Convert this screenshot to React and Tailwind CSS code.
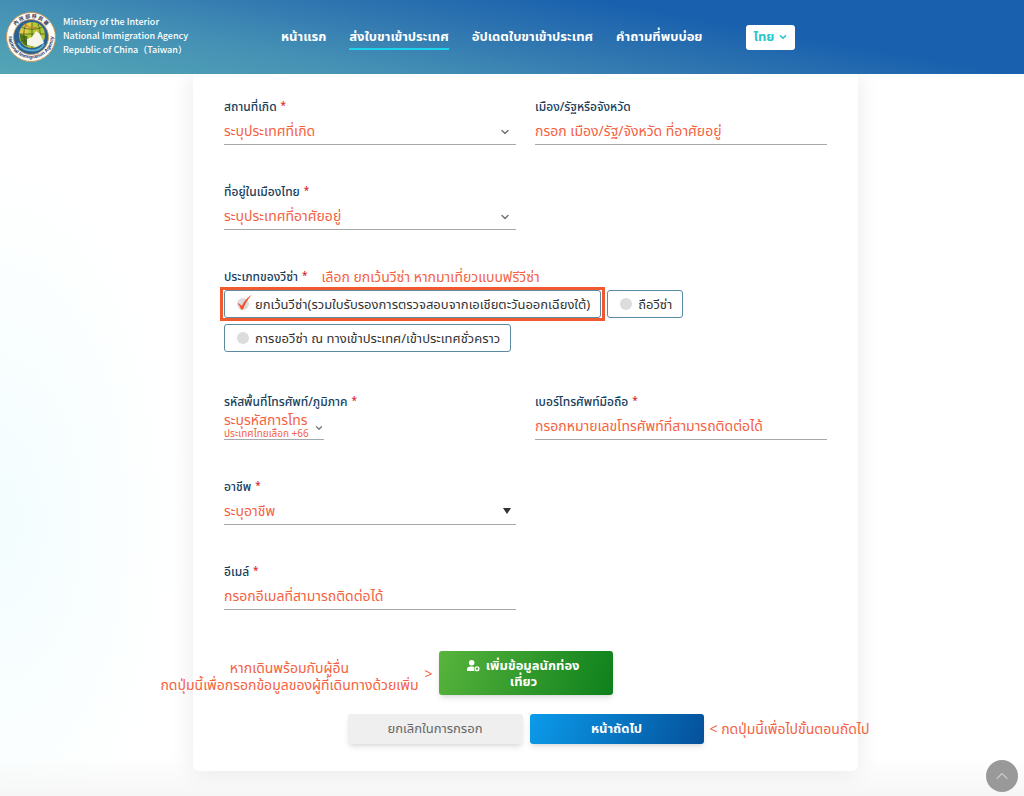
import React, { useState } from 'react';
import { ChevronDown, ChevronUp } from 'lucide-react';

const NAV_ITEMS = [
    { label: 'หน้าแรก' },
    { label: 'ส่งใบขาเข้าประเทศ', active: true },
    { label: 'อัปเดตใบขาเข้าประเทศ' },
    { label: 'คำถามที่พบบ่อย' },
];

const VISA_TYPES = [
    { id: 'exempt', label: 'ยกเว้นวีซ่า(รวมใบรับรองการตรวจสอบจากเอเชียตะวันออกเฉียงใต้)' },
    { id: 'holder', label: 'ถือวีซ่า' },
    { id: 'arrival', label: 'การขอวีซ่า ณ ทางเข้าประเทศ/เข้าประเทศชั่วคราว' },
];

const AgencySeal = () => (
    <svg viewBox="0 0 50 50" className="size-[50px] shrink-0" aria-hidden="true">
        <defs>
            <path id="seal-top" d="M 6 25 A 19 19 0 0 1 44 25" />
            <path id="seal-bottom" d="M 2.500 24 A 22.500 22.500 0 0 0 47.500 24" />
        </defs>
        <circle cx="25" cy="25" r="24.500" fill="#fdfcf6" stroke="#c9985a" strokeWidth="1" />
        <circle cx="25" cy="25" r="17.500" fill="#2c5f94" stroke="#c99a58" strokeWidth="0.800" />
        <circle cx="26" cy="23" r="13" fill="#b5c832" />
        <path d="M13 22 Q17 10 27 10.500 Q22 15 22 22 Q17 25 13 22" fill="#e6c94a" />
        <path d="M18 33 Q13 27 14 22 L21 24 L24 34 Z" fill="#54781f" />
        <path d="M13 22 H39 M16 15.500 Q26 19 36 15.500 M15 29 H37 M26 10 V36 M20 12 Q15 23 21 34 M32 12 Q37 23 31 34" fill="none" stroke="#33551c" strokeWidth="0.700" />
        <path d="M21 27 L26 25 L30 19 L34 22 L38 31 L30 35 L21 33 Z" fill="#f6f5ea" />
        <path d="M17 11 L24 15 L32 15 L28 17 L19 14 Z" fill="#c8813a" />
        <path d="M12 31 Q17 39 27 38.500 Q35 38 38 32" fill="none" stroke="#57b0c9" strokeWidth="2" />
        <text className="font-['Noto_Sans_CJK_TC',sans-serif] text-[5px] font-bold" fill="#3b3f63" textAnchor="middle">
            <textPath href="#seal-top" startOffset="50%">內 政 部 移 民 署</textPath>
        </text>
        <text className="font-['Liberation_Sans',sans-serif] text-[5px] font-bold" fill="#2b3570" textAnchor="middle">
            <textPath href="#seal-bottom" startOffset="50%">National Immigration Agency</textPath>
        </text>
    </svg>
);

const UserPlusIcon = () => (
    <svg viewBox="0 0 14 13" className="w-[13px] h-3 inline-block mr-0.5" fill="currentColor" aria-hidden="true">
        <circle cx="5" cy="3" r="3" />
        <path d="M0 12 V10 Q0 7 4 7 H6 Q7.500 7 8 7.500 Q6.500 9.500 8 12 Z" />
        <circle cx="10.800" cy="9.500" r="2" fill="none" stroke="currentColor" strokeWidth="1.500" />
    </svg>
);

const FieldLabel = ({ htmlFor, required, compact, children }) => (
    <label
        htmlFor={htmlFor}
        className={
            compact
                ? 'flex h-4 leading-5 text-xs font-medium text-[#17405c] whitespace-nowrap'
                : 'flex h-5 leading-5 text-xs font-medium text-[#17405c] whitespace-nowrap'
        }
    >
        {children}
        {required && <span className="ml-1 text-[10px] leading-4 text-[#d8262f]">*</span>}
    </label>
);

const TextField = ({ id, label, required, placeholder }) => (
    <div className="flex flex-col">
        <FieldLabel htmlFor={id} required={required}>{label}</FieldLabel>
        <input
            id={id}
            placeholder={placeholder}
            className="h-7 w-full border-b border-[#a3a9ad] bg-transparent text-sm text-[#f4623f] placeholder:text-[#f4623f] outline-none"
        />
    </div>
);

const SelectField = ({ id, label, required, placeholder, solidArrow }) => (
    <div className="flex flex-col">
        <FieldLabel htmlFor={id} required={required}>{label}</FieldLabel>
        <div className="relative">
            <select
                id={id}
                className="block h-7 w-full appearance-none border-b border-[#a3a9ad] bg-transparent text-sm text-[#f4623f] outline-none"
            >
                <option>{placeholder}</option>
            </select>
            {solidArrow ? (
                <svg viewBox="0 0 8 6" className="absolute right-[5px] top-[11px] w-2 h-1.5 pointer-events-none" aria-hidden="true">
                    <path d="M0 0 H8 L4 6 Z" fill="#333" />
                </svg>
            ) : (
                <ChevronDown size={12} strokeWidth={3} className="absolute right-[5px] top-[9px] text-[#777] pointer-events-none" />
            )}
        </div>
    </div>
);

const VisaOption = ({ option, checked, onChange }) => (
    <label className="relative flex items-center gap-1.5 h-7 rounded-[3px] border border-[#5d8aa3] pl-3 pr-2.5">
        {checked && <span className="absolute -inset-x-[5px] -inset-y-[4px] border-3 border-[#f15a31] pointer-events-none" />}
        <span className="relative size-3">
            <input
                type="radio"
                name="visa"
                checked={checked}
                onChange={onChange}
                className="block size-3 appearance-none rounded-full bg-[#dcdcdc]"
            />
            {checked && (
                <svg viewBox="0 0 16 16" className="absolute left-0 -top-1 size-4 pointer-events-none" aria-hidden="true">
                    <path d="M0.500 9 Q3 9.500 4.800 12 Q8 5 15 0.500 Q9 7 6 15.500 L4 15.500 Q2.500 11 0.500 9 Z" fill="#f0532d" />
                </svg>
            )}
        </span>
        <span className="text-[13px] leading-5 text-[#333] whitespace-nowrap">{option.label}</span>
    </label>
);

export default function App() {
    const [visa, setVisa] = useState('exempt');

    return (
        <div className="min-h-screen bg-[radial-gradient(ellipse_180px_360px_at_0_520px,#f3fdfe,transparent)] font-['Noto_Sans','Noto_Sans_Thai',sans-serif]">
            <header className="relative z-10 flex items-center h-[74px] px-1.5 bg-[linear-gradient(10deg,#54a6b5,#4490b5_28%,#2f75b0_50%,#1961ae_70%)] text-white">
                <AgencySeal />
                <div className="ml-[7px] w-[218px] shrink-0 pb-0.5 font-['Noto_Sans_CJK_TC',sans-serif] text-[9px] leading-[14px] font-medium">
                    <p>Ministry of the Interior</p>
                    <p>National Immigration Agency</p>
                    <p>Republic of China（Taiwan）</p>
                </div>
                <nav className="flex items-center gap-[23px] text-[13px] leading-4 font-bold whitespace-nowrap">
                    {NAV_ITEMS.map((item) => (
                        <a
                            key={item.label}
                            href="#"
                            className={item.active ? 'pt-1 pb-1 border-b-2 border-[#1fd3ee]' : 'pt-1 pb-1 border-b-2 border-transparent'}
                        >
                            {item.label}
                        </a>
                    ))}
                </nav>
                <button type="button" className="ml-11 flex items-center justify-center gap-1 w-[49px] h-[25px] rounded-[3px] bg-white text-[13px] font-bold text-[#2cc5c9]">
                    ไทย
                    <ChevronDown size={10} strokeWidth={4} />
                </button>
            </header>

            <main className="pl-[27px] pb-[25px] bg-[linear-gradient(to_top,#f6f6f6,transparent_40px)]">
                <form className="mx-auto max-w-[665px] rounded-b-md bg-white px-[31px] pt-[23px] pb-[27px] shadow-[0_0_24px_rgba(0,0,0,0.09)]">
                    <div className="grid grid-cols-2 gap-x-[19px] gap-y-[37px]">
                        <SelectField id="birthplace" label="สถานที่เกิด" required placeholder="ระบุประเทศที่เกิด" />
                        <TextField id="city" label="เมือง/รัฐหรือจังหวัด" placeholder="กรอก เมือง/รัฐ/จังหวัด ที่อาศัยอยู่" />
                        <SelectField id="residence" label="ที่อยู่ในเมืองไทย" required placeholder="ระบุประเทศที่อาศัยอยู่" />

                        <fieldset className="col-span-2 pb-[3px]">
                            <legend className="flex h-[23px] leading-5 text-xs font-medium text-[#17405c]">
                                ประเภทของวีซ่า<span className="ml-1 text-[10px] leading-4 text-[#d8262f]">*</span>
                                <span className="ml-3.5 text-sm leading-5 font-normal text-[#f4623f]">เลือก ยกเว้นวีซ่า หากมาเที่ยวแบบฟรีวีซ่า</span>
                            </legend>
                            <div className="flex flex-wrap gap-1.5">
                                {VISA_TYPES.map((option) => (
                                    <VisaOption
                                        key={option.id}
                                        option={option}
                                        checked={visa === option.id}
                                        onChange={() => setVisa(option.id)}
                                    />
                                ))}
                            </div>
                        </fieldset>

                        <div className="flex flex-col">
                            <FieldLabel htmlFor="dial-code" required compact>รหัสพื้นที่โทรศัพท์/ภูมิภาค</FieldLabel>
                            <div className="relative w-[100px] text-[#f4623f]">
                                {/* the hint sits inside the select, under its value */}
                                <select
                                    id="dial-code"
                                    aria-describedby="dial-hint"
                                    className="block h-8 w-full appearance-none border-b border-[#a3a9ad] bg-transparent pb-2 text-sm outline-none"
                                >
                                    <option>ระบุรหัสการโทร</option>
                                </select>
                                <p id="dial-hint" className="absolute left-0 bottom-px text-[10px] leading-3 whitespace-nowrap pointer-events-none">ประเทศไทยเลือก +66</p>
                                <ChevronDown size={10} strokeWidth={3} className="absolute right-0 top-[15px] text-[#777] pointer-events-none" />
                            </div>
                        </div>
                        <TextField id="mobile" label="เบอร์โทรศัพท์มือถือ" required placeholder="กรอกหมายเลขโทรศัพท์ที่สามารถติดต่อได้" />
                        <div className="col-span-2 grid grid-cols-2 gap-x-[19px] gap-y-[37px]">
                            <SelectField id="job" label="อาชีพ" required placeholder="ระบุอาชีพ" solidArrow />
                            <div className="col-start-1">
                                <TextField id="email" label="อีเมล์" required placeholder="กรอกอีเมลที่สามารถติดต่อได้" />
                            </div>
                        </div>
                    </div>

                    <div className="mt-[41px] flex justify-center">
                        <div className="relative">
                            <div className="absolute right-full top-1/2 -translate-y-1/2 mr-1.5 flex items-center gap-1.5 text-center text-sm leading-[17px] text-[#f4623f] whitespace-nowrap">
                                <p className="pt-1.5">
                                    หากเดินพร้อมกับผู้อื่น<br />
                                    กดปุ่มนี้เพื่อกรอกข้อมูลของผู้ที่เดินทางด้วยเพิ่ม
                                </p>
                                <span>&gt;</span>
                            </div>
                            <button type="button" className="block w-[174px] h-11 pr-3 pl-2 rounded-[3px] bg-[linear-gradient(110deg,#58b43c,#0d801c)] shadow-md text-[13px] leading-4 font-bold text-white">
                                <UserPlusIcon /> เพิ่มข้อมูลนักท่อง<br />เที่ยว
                            </button>
                        </div>
                    </div>
                    <div className="mt-[19px] flex justify-center gap-[7px]">
                        <button type="button" className="w-[175px] h-[30px] rounded-[3px] bg-[#efefef] shadow-md text-[13px] text-[#666]">
                            ยกเลิกในการกรอก
                        </button>
                        <div className="relative">
                            <button type="submit" className="block w-[174px] h-[30px] rounded-[3px] bg-[linear-gradient(110deg,#0b9bea,#05509a)] shadow-md text-[13px] font-bold text-white">
                                หน้าถัดไป
                            </button>
                            <p className="absolute left-full top-1/2 -translate-y-1/2 ml-1.5 text-sm leading-4 text-[#f4623f] whitespace-nowrap">&lt; กดปุ่มนี้เพื่อไปขั้นตอนถัดไป</p>
                        </div>
                    </div>
                </form>
            </main>

            <button type="button" aria-label="Top" className="fixed right-1.5 bottom-1 flex items-center justify-center size-8 rounded-full bg-[#999] text-white">
                <ChevronUp size={20} strokeWidth={1} />
            </button>
        </div>
    );
}
